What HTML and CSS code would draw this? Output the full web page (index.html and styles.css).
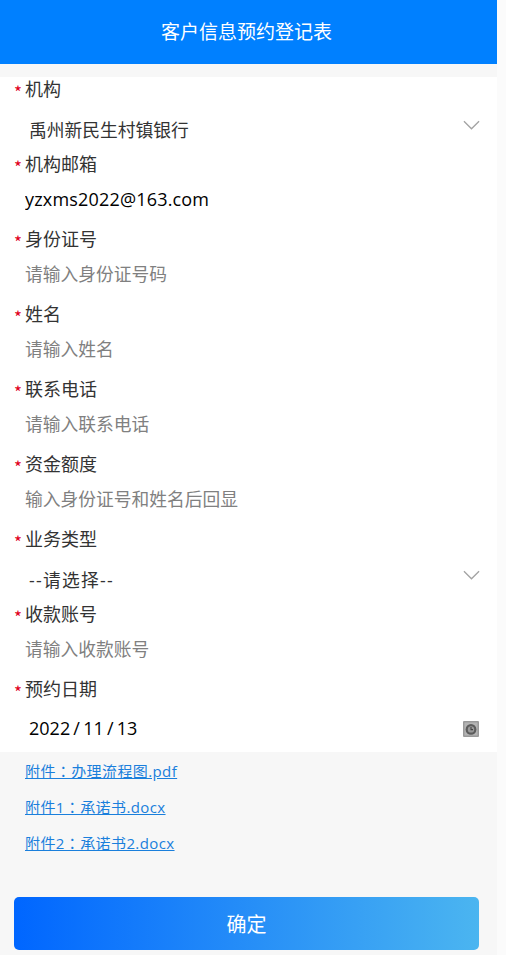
FILE: index.html
```html
<!DOCTYPE html>
<html lang="zh-CN">
<head>
<meta charset="utf-8">
<title>客户信息预约登记表</title>
<link rel="stylesheet" href="styles.css">
</head>
<body>
<div class="page">
  <header class="header">客户信息预约登记表</header>
  <form class="form">
    <div class="row">
      <label class="label"><span class="star">*</span>机构</label>
      <div class="field select"><span>禹州新民生村镇银行</span>
        <svg class="chev" viewBox="0 0 18 10"><path d="M1 1l8 8 8-8" fill="none" stroke="#a3a3a3" stroke-width="1.4"/></svg></div>
    </div>
    <div class="row">
      <label class="label"><span class="star">*</span>机构邮箱</label>
      <input class="input" value="yzxms2022@163.com">
    </div>
    <div class="row">
      <label class="label"><span class="star">*</span>身份证号</label>
      <input class="input" placeholder="请输入身份证号码">
    </div>
    <div class="row">
      <label class="label"><span class="star">*</span>姓名</label>
      <input class="input" placeholder="请输入姓名">
    </div>
    <div class="row">
      <label class="label"><span class="star">*</span>联系电话</label>
      <input class="input" placeholder="请输入联系电话">
    </div>
    <div class="row">
      <label class="label"><span class="star">*</span>资金额度</label>
      <input class="input" placeholder="输入身份证号和姓名后回显">
    </div>
    <div class="row">
      <label class="label"><span class="star">*</span>业务类型</label>
      <div class="field select"><span class="prompt">--请选择--</span>
        <svg class="chev" viewBox="0 0 18 10"><path d="M1 1l8 8 8-8" fill="none" stroke="#a3a3a3" stroke-width="1.4"/></svg></div>
    </div>
    <div class="row">
      <label class="label"><span class="star">*</span>收款账号</label>
      <input class="input" placeholder="请输入收款账号">
    </div>
    <div class="row">
      <label class="label"><span class="star">*</span>预约日期</label>
      <div class="field date"><span>2022<span class="sep">/</span>11<span class="sep">/</span>13</span>
        <svg class="cal" viewBox="0 0 16 16"><rect width="16" height="16" rx="1" fill="#9a9a9a"/><rect x="1.5" y="1.5" width="13" height="13" fill="#b4b4b4"/><circle cx="8" cy="8.4" r="5.4" fill="#5c5c5c"/><circle cx="8" cy="8.4" r="3.2" fill="#999"/><path d="M8 6v2.6h2" fill="none" stroke="#444" stroke-width="1.1"/></svg></div>
    </div>
  </form>
  <div class="links" lang="zh-TW">
    <a href="#">附件：办理流程图.pdf</a>
    <a href="#">附件1：承诺书.docx</a>
    <a href="#">附件2：承诺书2.docx</a>
  </div>
  <div class="actions"><button class="submit" type="button">确定</button></div>
</div>
</body>
</html>
```
FILE: styles.css
```css
* { box-sizing: border-box; }
html, body { margin: 0; padding: 0; height: 100%; overflow: hidden; background: #fbfbfb; }
body { font-family: "Open Sans", "Noto Sans CJK SC", sans-serif; color: #333; }
.page { width: 497px; height: 955px; background: #f7f7f7; }
.header { height: 64px; padding: 0 4px 3px 0; background: #0080ff; color: #fff; font-size: 19px; display: flex; align-items: center; justify-content: center; }
.form { margin-top: 13px; background: #fff; height: 675px; }
.row { height: 75px; }
.label { display: flex; align-items: center; height: 25px; padding: 0 0 0 14px; font-size: 18px; line-height: 25px; color: #333; }
.star { width: 11px; color: #e0001b; font-family: "Noto Sans CJK SC", sans-serif; font-size: 17px; line-height: 25px; padding-top: 4px; }
.input { display: block; width: 100%; height: 50px; border: 0; outline: 0; padding: 0 25px 6px; background: transparent; font: inherit; font-size: 18px; letter-spacing: .18px; color: #000; }
.input::placeholder { color: #808080; opacity: 1; font-size: 17.75px; letter-spacing: 0; }
.field { height: 50px; display: flex; align-items: center; justify-content: space-between; padding: 0 17px 0 29px; font-size: 17.75px; }
.select { color: #333; padding-top: 4px; }
.prompt { letter-spacing: 1.25px; }
.chev { width: 17px; height: 10px; margin-top: -9px; }
.date { color: #000; padding-top: 2px; font-size: 18px; padding-right: 18px; }
.sep { margin: 0 3.2px; }
.cal { width: 16px; height: 16px; margin-top: 2px; }
.links { padding: 7px 25px 0; display: flex; flex-direction: column; align-items: flex-start; gap: 12px; font-family: "Open Sans", "Noto Sans CJK TC", sans-serif; }
.links a { font-size: 15px; line-height: 24px; letter-spacing: .4px; color: #1a7fdc; text-decoration: underline; }
.actions { padding: 42px 18px 0 14px; }
.submit { display: block; width: 100%; height: 53px; border: 0; border-radius: 5px; background: linear-gradient(90deg, #0066ff, #4bb5f0); color: #fff; font: inherit; font-size: 20px; }
```
